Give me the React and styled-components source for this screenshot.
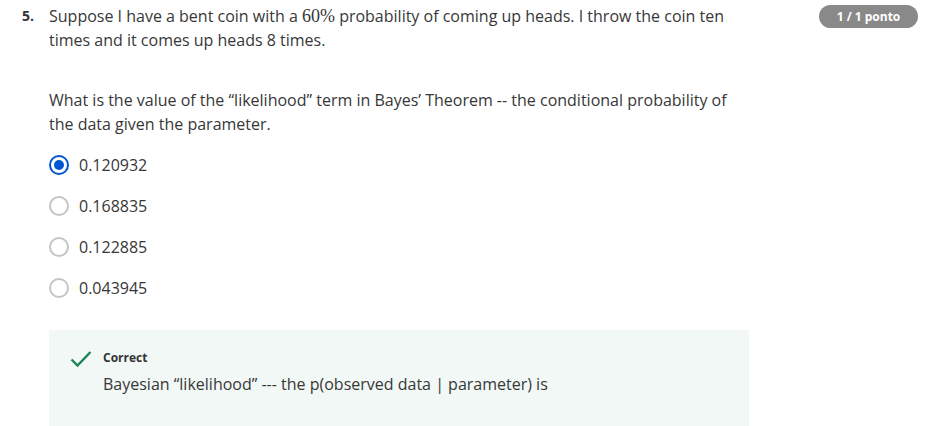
import React, { useState } from 'react';
import styled, { createGlobalStyle } from 'styled-components';

const GlobalStyle = createGlobalStyle`
    body {
        margin: 0;
        background: #fff;
        font-family: "Open Sans", "Noto Sans", Arial, sans-serif;
        color: #373737;
    }
`;

const Page = styled.div`
    position: relative;
    display: flex;
    padding: 4px 0 0 22px;
    height: 422px;
    overflow: hidden;
`;

const Number = styled.div`
    width: 27px;
    flex-shrink: 0;
    font-size: 14px;
    font-weight: 700;
    line-height: 24px;
    color: #333;
`;

const Content = styled.div`
    width: 700px;
    display: flex;
    flex-direction: column;
`;

const Paragraph = styled.p`
    margin: 0 0 ${p => p.gap || 0}px;
    font-size: 16px;
    line-height: 24px;
`;

const Math = styled.span`
    font-family: "Liberation Serif", "DejaVu Serif", serif;
    font-size: 18px;
    line-height: 1;
`;

const Badge = styled.div`
    position: absolute;
    top: 5px;
    left: 819px;
    width: 99px;
    height: 23px;
    border-radius: 12px;
    background: #898989;
    color: #fff;
    font-size: 12px;
    font-weight: 700;
    display: flex;
    align-items: center;
    justify-content: center;
`;

const Options = styled.div`
    display: flex;
    flex-direction: column;
    margin-top: 8px;
`;

const Option = styled.label`
    display: flex;
    align-items: center;
    height: 41px;
    gap: 10px;
    font-size: 16px;
    cursor: pointer;
`;

const Radio = styled.span`
    width: 20px;
    height: 20px;
    box-sizing: border-box;
    border-radius: 50%;
    border: 2px solid ${p => (p.checked ? '#0056d2' : '#c4c4c4')};
    display: flex;
    align-items: center;
    justify-content: center;
    &::after {
        content: '';
        width: 10px;
        height: 10px;
        border-radius: 50%;
        background: ${p => (p.checked ? '#0056d2' : 'transparent')};
    }
`;

const Feedback = styled.div`
    margin-top: 22px;
    background: #f1f8f6;
    padding: 19px 20px 40px 21px;
    display: flex;
    gap: 11px;
    flex: 1;
`;

const FeedbackBody = styled.div`
    display: flex;
    flex-direction: column;
    gap: 5px;
`;

const Verdict = styled.div`
    font-size: 12px;
    font-weight: 700;
    line-height: 18px;
    color: #333;
`;

const Explanation = styled.div`
    font-size: 16px;
    line-height: 24px;
`;

const options = ['0.120932', '0.168835', '0.122885', '0.043945'];

const Check = () => (
    <svg width="22" height="18" viewBox="0 0 22 18" style={{ marginTop: 1 }}>
        <polyline points="1.5,9.5 7.5,15.5 20.5,2" fill="none" stroke="#1f8354" strokeWidth="2.4" />
    </svg>
);

const App = () => {
    const [selected, setSelected] = useState(0);

    return <Page>
        <GlobalStyle />
        <Number>5.</Number>
        <Content>
            <Paragraph gap={36}>
                Suppose I have a bent coin with a <Math>60%</Math> probability of coming up heads. I throw the coin ten times and it comes up heads 8 times.
            </Paragraph>
            <Paragraph>
                What is the value of the “likelihood” term in Bayes’ Theorem -- the conditional probability of the data given the parameter.
            </Paragraph>
            <Options>
                {options.map((o, i) => (
                    <Option key={o} onClick={() => setSelected(i)}>
                        <Radio checked={selected === i} />
                        {o}
                    </Option>
                ))}
            </Options>
            <Feedback>
                <Check />
                <FeedbackBody>
                    <Verdict>Correct</Verdict>
                    <Explanation>Bayesian “likelihood” --- the p(observed data | parameter) is</Explanation>
                </FeedbackBody>
            </Feedback>
        </Content>
        <Badge>1 / 1 ponto</Badge>
    </Page>;
};

export default App;
